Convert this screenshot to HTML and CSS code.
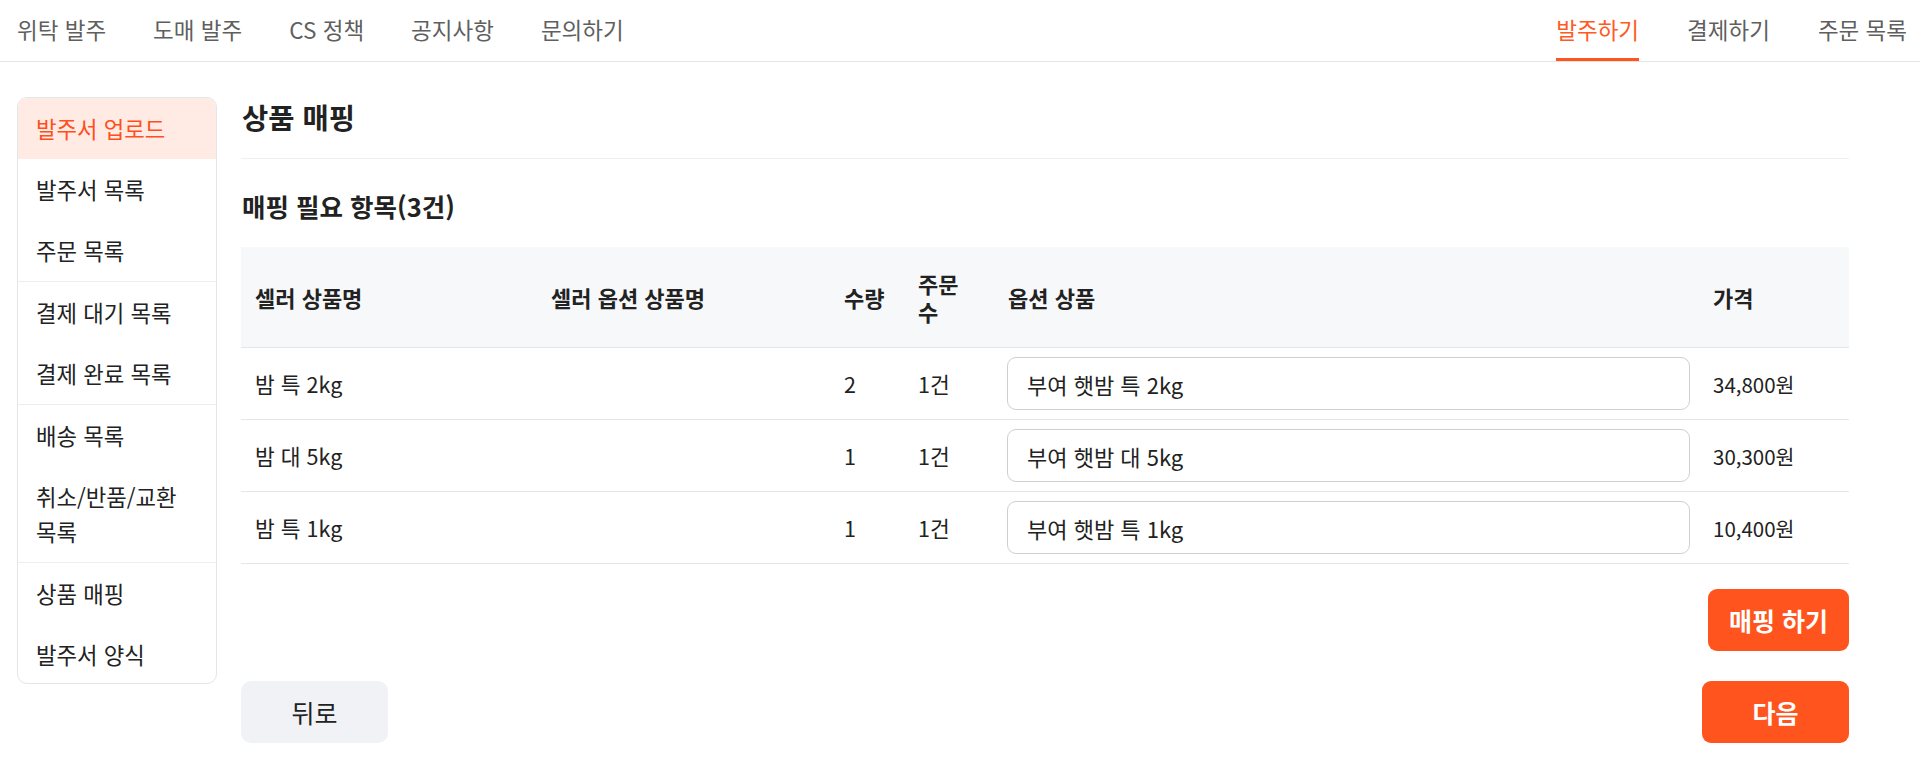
FILE: index.html
```html
<!DOCTYPE html>
<html lang="ko">
<head>
<meta charset="utf-8">
<title>상품 매핑</title>
<link rel="stylesheet" href="styles.css">
</head>
<body>
<header class="topnav">
  <nav class="nav-group nav-left">
    <a class="nav-item">위탁 발주</a>
    <a class="nav-item">도매 발주</a>
    <a class="nav-item">CS 정책</a>
    <a class="nav-item">공지사항</a>
    <a class="nav-item">문의하기</a>
  </nav>
  <nav class="nav-group">
    <a class="nav-item active">발주하기</a>
    <a class="nav-item">결제하기</a>
    <a class="nav-item">주문 목록</a>
  </nav>
</header>

<div class="layout">
  <aside class="sidebar">
    <div class="side-group">
      <a class="side-item active">발주서 업로드</a>
      <a class="side-item">발주서 목록</a>
      <a class="side-item">주문 목록</a>
    </div>
    <div class="side-group">
      <a class="side-item">결제 대기 목록</a>
      <a class="side-item">결제 완료 목록</a>
    </div>
    <div class="side-group">
      <a class="side-item">배송 목록</a>
      <a class="side-item">취소/반품/교환 목록</a>
    </div>
    <div class="side-group">
      <a class="side-item">상품 매핑</a>
      <a class="side-item">발주서 양식</a>
    </div>
  </aside>

  <main class="content">
    <h1 class="page-title">상품 매핑</h1>
    <h2 class="section-title">매핑 필요 항목(3건)</h2>

    <table class="map-table">
      <colgroup>
        <col class="c-name">
        <col class="c-opt">
        <col class="c-qty">
        <col class="c-cnt">
        <col class="c-sel">
        <col class="c-price">
      </colgroup>
      <thead>
        <tr>
          <th>셀러 상품명</th>
          <th>셀러 옵션 상품명</th>
          <th>수량</th>
          <th>주문 수</th>
          <th class="sel-cell">옵션 상품</th>
          <th>가격</th>
        </tr>
      </thead>
      <tbody>
        <tr>
          <td>밤 특 2kg</td>
          <td></td>
          <td>2</td>
          <td>1건</td>
          <td class="sel-cell"><div class="opt-select">부여 햇밤 특 2kg</div></td>
          <td class="price">34,800원</td>
        </tr>
        <tr>
          <td>밤 대 5kg</td>
          <td></td>
          <td>1</td>
          <td>1건</td>
          <td class="sel-cell"><div class="opt-select">부여 햇밤 대 5kg</div></td>
          <td class="price">30,300원</td>
        </tr>
        <tr>
          <td>밤 특 1kg</td>
          <td></td>
          <td>1</td>
          <td>1건</td>
          <td class="sel-cell"><div class="opt-select">부여 햇밤 특 1kg</div></td>
          <td class="price">10,400원</td>
        </tr>
      </tbody>
    </table>

    <div class="map-actions">
      <button class="btn btn-primary btn-map">매핑 하기</button>
    </div>

    <div class="page-actions">
      <button class="btn btn-secondary">뒤로</button>
      <button class="btn btn-primary btn-next">다음</button>
    </div>
  </main>
</div>
</body>
</html>
```

FILE: styles.css
```css
* {
  box-sizing: border-box;
}

html, body {
  margin: 0;
  padding: 0;
  background: #ffffff;
}

body {
  font-family: "Noto Sans CJK KR", "Noto Sans", sans-serif;
  color: #222222;
}

a {
  text-decoration: none;
  color: inherit;
  cursor: pointer;
}

/* Top navigation */
.topnav {
  display: flex;
  justify-content: space-between;
  height: 62px;
  padding: 0 13px 0 17px;
  border-bottom: 1px solid #e4e4e4;
}

.nav-group {
  display: flex;
  gap: 48px;
}

.nav-left {
  gap: 47px;
}

.nav-item {
  display: flex;
  align-items: center;
  height: 61px;
  border-bottom: 3px solid transparent;
  font-size: 22.5px;
  color: #5f5f5f;
  white-space: nowrap;
}

.nav-item.active {
  color: #ff5a24;
  border-bottom-color: #ff5420;
}

/* Layout */
.layout {
  display: flex;
  align-items: flex-start;
  gap: 24px;
  padding: 35px 71px 0 17px;
}

/* Sidebar */
.sidebar {
  flex: 0 0 200px;
  width: 200px;
  border: 1px solid #e2e5ea;
  border-radius: 10px;
  overflow: hidden;
}

.side-group + .side-group {
  border-top: 1px solid #eceef1;
}

.side-item {
  display: block;
  padding: 13px 18px;
  line-height: 35px;
  font-size: 22.3px;
  color: #222222;
  word-break: keep-all;
}

.side-group:last-child .side-item:last-child {
  padding-bottom: 11px;
}

.side-item.active {
  background: #ffebe3;
  color: #ff4f1c;
}

/* Content */
.content {
  flex: 1;
  min-width: 0;
}

.page-title {
  margin: 0;
  padding: 0 0 22px 1px;
  line-height: 39px;
  font-size: 28.5px;
  font-weight: 700;
  border-bottom: 1px solid #efefef;
}

.section-title {
  margin: 32px 0 26px;
  padding-left: 1px;
  line-height: 30px;
  font-size: 25.5px;
  font-weight: 700;
}

/* Table */
.map-table {
  width: 100%;
  table-layout: fixed;
  border-collapse: separate;
  border-spacing: 0;
  font-size: 21.5px;
}

.c-name { width: 296px; }
.c-opt { width: 293px; }
.c-qty { width: 74px; }
.c-cnt { width: 90px; }
.c-sel { width: 705px; }
.c-price { width: 150px; }

.map-table th,
.map-table td {
  padding: 0 14px;
  text-align: left;
  vertical-align: middle;
  border-bottom: 1px solid #e3e5e8;
}

.map-table th {
  height: 101px;
  background: #f7f8fa;
  font-size: 22px;
  font-weight: 700;
  line-height: 28px;
  word-break: keep-all;
}

.map-table td {
  height: 72px;
  line-height: 28px;
}

.map-table .sel-cell {
  padding: 0 9px 0 13px;
}

.map-table th.sel-cell {
  padding-left: 14px;
}

.opt-select {
  display: flex;
  align-items: center;
  width: 100%;
  height: 53px;
  padding: 0 19px;
  border: 1px solid #cfcfcf;
  border-radius: 9px;
  background: #ffffff;
  font-size: 22px;
}

.map-table td.price {
  white-space: nowrap;
  font-size: 20.5px;
}

/* Buttons */
.btn {
  display: inline-flex;
  align-items: center;
  justify-content: center;
  height: 62px;
  border: none;
  border-radius: 9px;
  font-family: inherit;
  font-size: 25px;
  cursor: pointer;
}

.btn-primary {
  background: #ff541e;
  color: #ffffff;
  font-weight: 700;
}

.btn-secondary {
  background: #f0f2f5;
  color: #222222;
  border-radius: 10px;
}

.map-actions {
  display: flex;
  justify-content: flex-end;
  margin-top: 25px;
}

.btn-map {
  width: 141px;
}

.page-actions {
  display: flex;
  justify-content: space-between;
  margin-top: 30px;
}

.page-actions .btn {
  width: 147px;
}
```
